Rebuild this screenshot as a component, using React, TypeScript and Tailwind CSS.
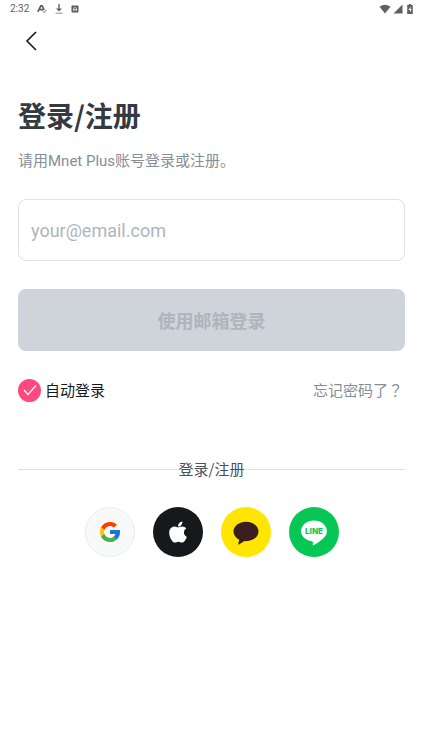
import { useState } from "react";
import type { ReactNode } from "react";
import { FaApple } from "react-icons/fa";
import { FcGoogle } from "react-icons/fc";

function KakaoIcon() {
  return (
    <svg viewBox="0 -2 26 26" className="size-[26px]" fill="#3b1e1e" aria-hidden="true">
      <path d="M13 .8C6.1.8.5 5.100.5 10.500c0 3.500 2.300 6.500 5.800 8.200L5.200 23c-.1.500.3.700.7.500l5.600-3.400c.5.050 1 .1 1.500.1 6.900 0 12.500-4.300 12.500-9.700S19.900.8 13 .8z" />
    </svg>
  );
}

function LineIcon() {
  return (
    <svg viewBox="0 -2 26 28" className="h-7 w-[26px]" aria-hidden="true">
      <path
        d="M13 .5C5.900.5.1 5.200.1 11c0 5.200 4.600 9.500 10.800 10.300.9.200 1.100.6 1 1.400l-.2 1.500c-.1.900.4 1.200 1.200.8 3.300-1.700 8-4.900 10.700-8 1.600-1.800 2.300-3.800 2.300-6C25.900 5.200 20.100.5 13 .5z"
        fill="white"
      />
      <text x="13" y="14" textAnchor="middle" className="fill-[#06c755] font-[Inter,sans-serif] text-[8px] font-extrabold">
        LINE
      </text>
    </svg>
  );
}

const providers: { label: string; className: string; icon: ReactNode }[] = [
  { label: "Google", className: "border border-[#e9ecef] bg-[#f8f9fa]", icon: <FcGoogle className="size-6" /> },
  { label: "Apple", className: "bg-[#16191c] text-white", icon: <FaApple className="size-6" /> },
  { label: "KakaoTalk", className: "bg-[#ffe500]", icon: <KakaoIcon /> },
  { label: "LINE", className: "bg-[#06c755]", icon: <LineIcon /> }
];

function StatusBar() {
  return (
    <div className="flex h-[17px] items-center justify-between pr-2 pl-[10px] font-[Roboto,sans-serif] text-[#616161]">
      <div className="flex items-center gap-2">
        <span className="text-[10px] leading-4">2:32</span>
        <svg viewBox="0 0 10 10" className="size-[10px]" fill="none" stroke="currentColor" aria-hidden="true">
          <path d="M.8 7.800 3.800 1.800h1.400L7.200 6M2.500 5.600h4" strokeWidth="1.700" />
          <path d="m6 7.500 1 1 2.500-2.500" strokeWidth="1" />
        </svg>
        <svg viewBox="0 0 8 10" className="h-[10px] w-2" fill="currentColor" aria-hidden="true">
          <path d="M3.300 0h1.400v4.500H7L4 7.500l-3-3h2.300z" />
          <path d="M.5 8.700h7v1H.5z" opacity=".7" />
        </svg>
        <svg viewBox="0 0 8 8" className="size-2" aria-hidden="true">
          <rect x=".5" y=".5" width="7" height="7" rx=".8" fill="currentColor" />
          <path d="M2.700 6V3.500L4 2.200l1.300 1.300V6M2.700 4.600h2.600" fill="none" stroke="white" strokeWidth=".8" />
        </svg>
      </div>
      <div className="flex items-center gap-[2px]">
        <svg viewBox="0 0 12 10" className="h-[10px] w-3" fill="currentColor" aria-hidden="true">
          <path d="M6 9.500.5 2.700Q6-1.300 11.500 2.700z" />
        </svg>
        <svg viewBox="0 0 10 10" className="size-[10px]" fill="currentColor" aria-hidden="true">
          <path d="M.5 9.500 9.500.5v9z" />
        </svg>
        <svg viewBox="0 0 10 10" className="size-[10px]" aria-hidden="true">
          <path d="M3.800 0h2.400v1h1.600v9H2.200V1h1.600z" fill="currentColor" />
          <path d="M5.500 2.500 3.500 6H5v2.500L6.700 5H5.500z" fill="white" />
        </svg>
      </div>
    </div>
  );
}

export default function App() {
  const [email, setEmail] = useState("");
  const [autoLogin, setAutoLogin] = useState(true);

  return (
    <div className="min-h-screen bg-white font-['Noto_Sans_CJK_SC',sans-serif]">
      <StatusBar />

      <header className="flex h-12 items-center px-[18px]">
        <button type="button" aria-label="返回" className="flex size-[26px] items-center justify-center text-[#16191c]">
          <svg viewBox="0 0 14 20" className="h-5 w-[14px]" fill="none" stroke="currentColor" strokeWidth="1.600" aria-hidden="true">
            <path d="M12 1 3 10l9 9" />
          </svg>
        </button>
      </header>

      <main className="px-[18px] pt-[30px]">
        <h1 className="text-[28px] leading-10 font-bold text-[#343a40]">登录/注册</h1>
        <p className="mt-[14px] font-[Roboto,'Noto_Sans_CJK_SC',sans-serif] text-[15px] leading-6 text-[#868e96]">
          请用Mnet Plus账号登录或注册。
        </p>

        <form className="mt-[26px]" onSubmit={(event) => event.preventDefault()}>
          <input
            type="email"
            aria-label="your@email.com"
            placeholder="your@email.com"
            value={email}
            onChange={(event) => setEmail(event.target.value)}
            className="block h-[62px] w-full rounded-lg border border-[#dee2e6] px-3 font-[Roboto,sans-serif] text-lg text-[#343a40] outline-none placeholder:text-[#adb5bd]"
          />
          <button
            type="submit"
            disabled={!email}
            className="mt-7 flex h-[62px] w-full items-center justify-center rounded-lg bg-[#ced4da] text-lg font-bold text-[#adb5bd]"
          >
            使用邮箱登录
          </button>

          <div className="mt-[27px] flex items-center justify-between">
            <label className="flex items-center gap-1 text-[15px] leading-6 text-[#16191c]">
              <span className="grid size-[23px] place-items-center">
                <input
                  type="checkbox"
                  checked={autoLogin}
                  onChange={(event) => setAutoLogin(event.target.checked)}
                  className="col-start-1 row-start-1 size-[23px] appearance-none rounded-full bg-[#ced4da] checked:bg-[#ff4880]"
                />
                <svg viewBox="0 0 14 12" className="pointer-events-none col-start-1 row-start-1 h-3 w-[14px]" fill="none" stroke="white" strokeWidth="1.200" aria-hidden="true">
                  <path d="m1 6 4 4.500L13 1.500" />
                </svg>
              </span>
              自动登录
            </label>
            <a href="#" lang="zh-Hant" className="pr-[2px] font-['Noto_Sans_CJK_TC','Noto_Sans_CJK_SC',sans-serif] text-[15px] leading-6 text-[#868e96]">
              忘记密码了？
            </a>
          </div>
        </form>

        <section className="mt-[55px]">
          <div className="flex items-center">
            <span className="h-px flex-1 bg-[#dee2e6]" />
            <h2 className="text-[15px] leading-6 text-[#495057]">登录/注册</h2>
            <span className="h-px flex-1 bg-[#dee2e6]" />
          </div>
          <div className="mt-[26px] flex justify-center gap-[18px]">
            {providers.map((provider) => (
              <button
                key={provider.label}
                type="button"
                aria-label={provider.label}
                className={`flex size-[50px] items-center justify-center rounded-full ${provider.className}`}
              >
                {provider.icon}
              </button>
            ))}
          </div>
        </section>
      </main>
    </div>
  );
}
